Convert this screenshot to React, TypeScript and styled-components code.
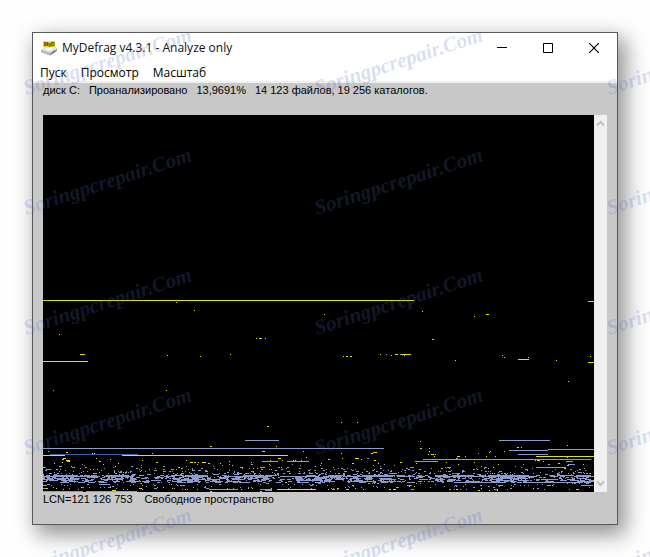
import React from 'react';
import styled, { createGlobalStyle } from 'styled-components';

const GlobalStyle = createGlobalStyle`
  * { box-sizing: border-box; }
  body { margin: 0; background: #fefefe; overflow: hidden; }
  button { font: inherit; color: inherit; border: 0; padding: 0; background: none; }
`;

const Desktop = styled.main`
  position: relative;
  display: flex;
  min-height: 100vh;
  padding: 32px;
`;

const Window = styled.section`
  flex: 1;
  display: flex;
  flex-direction: column;
  min-width: 0;
  border: 1px solid #585858;
  background: #c8c8c8;
  box-shadow: 6px 8px 20px 2px rgba(0, 0, 0, 0.42);
`;

const TitleBar = styled.header`
  display: flex;
  align-items: center;
  height: 30px;
  padding-left: 8px;
  background: #fff;
  color: #111;
  font: 12px/16px 'Open Sans', 'Noto Sans', sans-serif;
`;

const Title = styled.h1`
  flex: 1;
  margin: 0 0 0 5px;
  font: inherit;
  white-space: pre;
`;

const CaptionButton = styled.button`
  display: grid;
  place-items: center;
  width: 46px;
  height: 28px;
`;

const MenuBar = styled.nav`
  display: flex;
  gap: 14px;
  height: 20px;
  padding: 0 7px;
  border-bottom: 2px solid #f0f0f0;
  background: #fff;
  color: #000;
  font: 12px/20px 'Open Sans', 'Noto Sans', sans-serif;
`;

const Client = styled.div`
  flex: 1;
  display: flex;
  flex-direction: column;
  padding: 0 10px;
`;

const StatusLine = styled.div<{ $gap: number }>`
  display: flex;
  gap: ${(p) => p.$gap}px;
  height: 32px;
  color: #000;
  font: 11px/14px 'Liberation Sans', Arial, sans-serif;
  white-space: nowrap;
`;

const MapArea = styled.div`
  flex: 1;
  display: flex;
  min-height: 0;
  background: #000;
`;

const DiskMap = styled.svg`
  flex: 1;
  min-width: 0;
  width: 0;
  height: 100%;
  min-height: 377px;
`;

const ScrollBar = styled.div`
  display: flex;
  flex-direction: column;
  justify-content: space-between;
  width: 13px;
  background: #f0f0f0;
`;

const ScrollButton = styled.button`
  display: grid;
  place-items: center;
  height: 17px;
`;

const Watermark = styled.svg`
  position: absolute;
  inset: 0;
  width: 100%;
  height: 100%;
  pointer-events: none;
  font: italic bold 21px 'Liberation Serif', 'Times New Roman', serif;
  fill: rgba(84, 112, 190, 0.24);
`;

const YELLOW = '#e4e400';
const BLUE = '#8c9ccc';
const NAVY = '#3c64a8';

type Run = [x: number, y: number, width: number];

const yellowRuns: Run[] = [
  [0, 185, 371], [545, 186, 6], [133, 187, 1], [151, 195, 1], [16, 219, 1], [37, 239, 5],
  [0, 246, 45], [124, 240, 1], [157, 241, 1], [187, 239, 1], [123, 275, 1], [281, 199, 1],
  [213, 223, 1], [216, 223, 3], [222, 223, 1], [300, 241, 1], [303, 241, 2], [307, 241, 2],
  [337, 239, 1], [348, 240, 1], [352, 239, 3], [358, 239, 10], [361, 240, 1], [379, 196, 1],
  [431, 201, 1], [443, 199, 3], [389, 224, 2], [412, 245, 1], [459, 240, 1], [461, 242, 1],
  [475, 244, 11], [485, 242, 1], [513, 245, 1], [547, 241, 1], [545, 247, 6], [525, 266, 1],
  [224, 311, 2], [298, 307, 1], [314, 307, 1], [233, 331, 1], [167, 331, 2], [219, 336, 3],
  [0, 340, 22], [79, 340, 166], [493, 341, 58], [330, 337, 4], [328, 338, 2], [234, 374, 39],
  [5, 336, 1], [23, 337, 2], [49, 338, 1], [51, 338, 1], [109, 338, 1], [260, 336, 1],
  [298, 338, 1], [377, 326, 1], [377, 333, 2], [386, 333, 1], [386, 336, 1], [385, 339, 1],
  [388, 339, 3], [392, 339, 1], [391, 341, 1], [414, 341, 3], [422, 341, 1], [447, 336, 1],
  [446, 337, 1], [443, 341, 1], [452, 341, 1], [461, 336, 1], [474, 332, 2], [478, 332, 1],
  [524, 330, 1], [524, 342, 1], [20, 343, 3], [19, 344, 2], [23, 345, 4], [24, 346, 3],
  [19, 347, 1], [11, 348, 1], [53, 343, 1], [56, 346, 2], [67, 344, 1], [60, 349, 1],
  [75, 348, 1], [72, 351, 1], [99, 345, 1], [113, 347, 2], [143, 345, 1], [147, 347, 3],
  [151, 347, 2], [155, 347, 1], [159, 347, 4], [165, 348, 2], [177, 348, 1], [186, 346, 1],
  [208, 347, 1], [227, 345, 1], [235, 343, 3], [239, 345, 1], [250, 345, 1], [252, 345, 1],
  [258, 345, 1], [263, 342, 1], [278, 348, 1], [285, 344, 2], [299, 343, 1], [309, 348, 2],
  [312, 343, 4], [318, 344, 1], [331, 345, 2], [335, 348, 1], [357, 347, 2], [373, 348, 1],
  [403, 347, 1], [415, 349, 1], [431, 347, 1], [455, 349, 1], [492, 345, 1], [494, 345, 3],
  [500, 346, 1], [515, 348, 2], [524, 350, 2], [540, 349, 1], [28, 351, 1], [136, 352, 1],
  [189, 350, 1], [214, 353, 1], [272, 351, 1], [450, 352, 1], [521, 353, 2],
  [3, 373, 2], [13, 373, 1], [20, 374, 1], [69, 375, 4], [96, 373, 3], [99, 374, 1],
  [120, 372, 1], [129, 373, 1], [142, 374, 1], [167, 376, 2], [198, 374, 1], [209, 373, 1],
  [217, 376, 2], [228, 373, 1], [285, 374, 1], [294, 373, 2], [303, 374, 3], [312, 373, 1],
  [320, 374, 1], [346, 374, 2], [350, 374, 3], [366, 371, 1], [371, 371, 1], [413, 374, 2],
  [435, 375, 2], [438, 373, 1], [446, 375, 1], [454, 375, 1], [490, 373, 1], [509, 370, 1],
  [534, 374, 2],
];

const blueRuns: Run[] = [
  [10, 275, 1], [343, 239, 1], [357, 239, 1], [0, 333, 341], [202, 325, 34], [456, 325, 51],
  [466, 335, 39], [505, 334, 46], [475, 339, 30], [380, 344, 168], [219, 346, 16],
  [244, 346, 22], [372, 346, 23], [493, 352, 30], [525, 349, 7], [523, 346, 7],
  [538, 370, 12], [0, 376, 40], [43, 376, 51], [166, 374, 29], [56, 369, 11],
  [218, 374, 11], [222, 375, 7], [421, 361, 31], [411, 367, 50], [480, 367, 60],
  [435, 338, 1], [324, 343, 2], [413, 343, 2],
];

/* Rows of small fragments near the start of the disk: [y, coverage, longest run] */
const fragmentRows: [number, number, number][] = [
  [349, 0.01, 2], [350, 0.03, 2], [351, 0.03, 3], [352, 0.07, 6], [353, 0.05, 2],
  [354, 0.1, 3], [355, 0.12, 4], [356, 0.12, 3], [357, 0.1, 3], [358, 0.18, 3],
  [359, 0.18, 5], [360, 0.72, 9], [361, 0.78, 12], [362, 0.5, 6], [363, 0.5, 6],
  [364, 0.62, 10], [365, 0.5, 7], [366, 0.5, 9], [367, 0.34, 8], [368, 0.03, 3],
  [369, 0.05, 2], [370, 0.06, 5], [371, 0.03, 2], [372, 0.05, 3], [373, 0.03, 3],
  [374, 0.07, 4],
];

function buildFragments(): Run[] {
  let seed = 4319;
  const random = () => {
    seed = (seed * 1103515245 + 12345) % 2147483648;
    return seed / 2147483648;
  };
  const runs: Run[] = [];
  fragmentRows.forEach(([y, coverage, longest]) => {
    let x = 0;
    while (x < 551) {
      const width = Math.min(551 - x, 1 + Math.floor(random() * random() * longest));
      const wave = 1 + 0.4 * Math.sin(x / 14) * Math.cos(x / 37);
      if (random() < coverage * wave) runs.push([x, y, width]);
      x += width;
    }
  });
  return runs;
}

const toPath = (runs: Run[]) => runs.map(([x, y, w]) => `M${x} ${y}h${w}v1h-${w}z`).join('');

const blueFragments = toPath([...buildFragments(), ...blueRuns]);

const DriveIcon = () => (
  <svg width="16" height="16" viewBox="0 0 16 16" aria-hidden="true">
    <path d="M0 10 5 6.5h9l2 2.5v2l-7 4.5L0 12z" fill="#909498" />
    <path d="M0 10 5 6.5h9l2 2.5-7 4z" fill="#e4e6e8" />
    <path d="m0 10 9 3v2.5L0 12z" fill="#b8bcc0" />
    <path d="m5 9 3-1.5 4 1L9 10.5z" fill="#fff" />
    <path d="m11 13 3-2" stroke="#50545c" />
    <path d="M2 1h12v6H2z" fill="#e8cc10" />
    <path d="M2.5 1.5h11v1h-11z" fill="#fff04c" />
    <text x="3" y="6" fontFamily="Liberation Sans" fontSize="5" fontWeight="bold" fill="#403008">MyD</text>
  </svg>
);

const Chevron = ({ down = false }: { down?: boolean }) => (
  <svg width="9" height="7" viewBox="0 0 9 7" aria-hidden="true">
    <path d={down ? 'M1 1.5 4.5 5 8 1.5' : 'M1 5.5 4.5 2 8 5.5'} fill="none" stroke="#bac8b0" strokeWidth="2" />
  </svg>
);

const watermarks = [95, 215, 335, 455, 575].flatMap((y) => [26, 317, 609].map((x) => ({ x, y })));

export default function App() {
  return (
    <Desktop>
      <GlobalStyle />
      <Window aria-label="MyDefrag">
        <TitleBar>
          <DriveIcon />
          <Title>MyDefrag v4.3.1 - Analyze only</Title>
          <CaptionButton aria-label="Свернуть">
            <svg width="10" height="10"><path d="M0 4.5h10" stroke="#000" /></svg>
          </CaptionButton>
          <CaptionButton aria-label="Развернуть">
            <svg width="10" height="10"><path d="M.5.5h9v9h-9z" fill="none" stroke="#000" /></svg>
          </CaptionButton>
          <CaptionButton aria-label="Закрыть">
            <svg width="10" height="10"><path d="m0 0 10 10M10 0 0 10" stroke="#000" strokeWidth="1.2" /></svg>
          </CaptionButton>
        </TitleBar>
        <MenuBar>
          <button>Пуск</button>
          <button>Просмотр</button>
          <button>Масштаб</button>
        </MenuBar>
        <Client>
          <StatusLine $gap={9}>
            <span>диск C:</span>
            <span>Проанализировано</span>
            <span>13,9691%</span>
            <span>14 123 файлов, 19 256 каталогов.</span>
          </StatusLine>
          <MapArea>
            <DiskMap viewBox="0 0 551 377" preserveAspectRatio="none" shapeRendering="crispEdges" role="img" aria-label="Карта диска">
              <path d={blueFragments} fill={BLUE} />
              <path d="M7 339h88v1h-88z" fill={NAVY} />
              <path d={toPath(yellowRuns)} fill={YELLOW} />
            </DiskMap>
            <ScrollBar>
              <ScrollButton aria-label="Вверх"><Chevron /></ScrollButton>
              <ScrollButton aria-label="Вниз"><Chevron down /></ScrollButton>
            </ScrollBar>
          </MapArea>
          <StatusLine $gap={12}>
            <span>LCN=121 126 753</span>
            <span>Свободное пространство</span>
          </StatusLine>
        </Client>
      </Window>
      <Watermark aria-hidden="true">
        {watermarks.map(({ x, y }) => (
          <text key={`${x}-${y}`} transform={`translate(${x} ${y}) rotate(-18)`}>Soringpcrepair.Com</text>
        ))}
      </Watermark>
    </Desktop>
  );
}
